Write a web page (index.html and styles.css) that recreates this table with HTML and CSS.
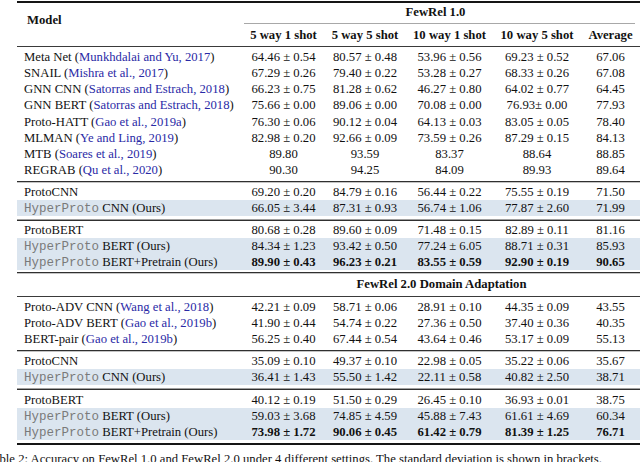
FILE: index.html
```html
<!DOCTYPE html>
<html>
<head>
<meta charset="utf-8">
<link rel="stylesheet" href="styles.css">
</head>
<body>
<div class="page">
  <div class="table">
    <div class="rule heavy"></div>
    <div class="head">
      <div class="model">Model</div>
      <div class="span">FewRel 1.0</div>
      <div class="cmid"></div>
      <div class="ch">5 way 1 shot</div>
      <div class="ch">5 way 5 shot</div>
      <div class="ch">10 way 1 shot</div>
      <div class="ch">10 way 5 shot</div>
      <div class="ch">Average</div>
    </div>
    <div class="rule"></div>
    <div class="group ga">
      <div class="row"><span>Meta Net (<span class="cite">Munkhdalai and Yu, 2017</span>)</span><span>64.46 ± 0.54</span><span>80.57 ± 0.48</span><span>53.96 ± 0.56</span><span>69.23 ± 0.52</span><span>67.06</span></div>
      <div class="row"><span>SNAIL (<span class="cite">Mishra et al., 2017</span>)</span><span>67.29 ± 0.26</span><span>79.40 ± 0.22</span><span>53.28 ± 0.27</span><span>68.33 ± 0.26</span><span>67.08</span></div>
      <div class="row"><span>GNN CNN (<span class="cite">Satorras and Estrach, 2018</span>)</span><span>66.23 ± 0.75</span><span>81.28 ± 0.62</span><span>46.27 ± 0.80</span><span>64.02 ± 0.77</span><span>64.45</span></div>
      <div class="row"><span>GNN BERT (<span class="cite">Satorras and Estrach, 2018</span>)</span><span>75.66 ± 0.00</span><span>89.06 ± 0.00</span><span>70.08 ± 0.00</span><span>76.93± 0.00</span><span>77.93</span></div>
      <div class="row"><span>Proto-HATT (<span class="cite">Gao et al., 2019a</span>)</span><span>76.30 ± 0.06</span><span>90.12 ± 0.04</span><span>64.13 ± 0.03</span><span>83.05 ± 0.05</span><span>78.40</span></div>
      <div class="row"><span>MLMAN (<span class="cite">Ye and Ling, 2019</span>)</span><span>82.98 ± 0.20</span><span>92.66 ± 0.09</span><span>73.59 ± 0.26</span><span>87.29 ± 0.15</span><span>84.13</span></div>
      <div class="row"><span>MTB (<span class="cite">Soares et al., 2019</span>)</span><span>89.80</span><span>93.59</span><span>83.37</span><span>88.64</span><span>88.85</span></div>
      <div class="row"><span>REGRAB (<span class="cite">Qu et al., 2020</span>)</span><span>90.30</span><span>94.25</span><span>84.09</span><span>89.93</span><span>89.64</span></div>
    </div>
    <div class="rule soft"></div>
    <div class="group gb">
      <div class="row"><span>ProtoCNN</span><span>69.20 ± 0.20</span><span>84.79 ± 0.16</span><span>56.44 ± 0.22</span><span>75.55 ± 0.19</span><span>71.50</span></div>
      <div class="row hl"><span><span class="mono">HyperProto</span> CNN (Ours)</span><span>66.05 ± 3.44</span><span>87.31 ± 0.93</span><span>56.74 ± 1.06</span><span>77.87 ± 2.60</span><span>71.99</span></div>
    </div>
    <div class="rule dbl"></div>
    <div class="group gc">
      <div class="row"><span>ProtoBERT</span><span>80.68 ± 0.28</span><span>89.60 ± 0.09</span><span>71.48 ± 0.15</span><span>82.89 ± 0.11</span><span>81.16</span></div>
      <div class="row hl"><span><span class="mono">HyperProto</span> BERT (Ours)</span><span>84.34 ± 1.23</span><span>93.42 ± 0.50</span><span>77.24 ± 6.05</span><span>88.71 ± 0.31</span><span>85.93</span></div>
      <div class="row hl"><span><span class="mono">HyperProto</span> BERT+Pretrain (Ours)</span><span class="b">89.90 ± 0.43</span><span class="b">96.23 ± 0.21</span><span class="b">83.55 ± 0.59</span><span class="b">92.90 ± 0.19</span><span class="b">90.65</span></div>
    </div>
    <div class="rule soft"></div>
    <div class="group gh">
      <div class="row"><span></span><span class="span2">FewRel 2.0 Domain Adaptation</span></div>
    </div>
    <div class="rule"></div>
    <div class="group gd">
      <div class="row"><span>Proto-ADV CNN (<span class="cite">Wang et al., 2018</span>)</span><span>42.21 ± 0.09</span><span>58.71 ± 0.06</span><span>28.91 ± 0.10</span><span>44.35 ± 0.09</span><span>43.55</span></div>
      <div class="row"><span>Proto-ADV BERT (<span class="cite">Gao et al., 2019b</span>)</span><span>41.90 ± 0.44</span><span>54.74 ± 0.22</span><span>27.36 ± 0.50</span><span>37.40 ± 0.36</span><span>40.35</span></div>
      <div class="row"><span>BERT-pair (<span class="cite">Gao et al., 2019b</span>)</span><span>56.25 ± 0.40</span><span>67.44 ± 0.54</span><span>43.64 ± 0.46</span><span>53.17 ± 0.09</span><span>55.13</span></div>
    </div>
    <div class="rule soft"></div>
    <div class="group ge">
      <div class="row"><span>ProtoCNN</span><span>35.09 ± 0.10</span><span>49.37 ± 0.10</span><span>22.98 ± 0.05</span><span>35.22 ± 0.06</span><span>35.67</span></div>
      <div class="row hl"><span><span class="mono">HyperProto</span> CNN (Ours)</span><span>36.41 ± 1.43</span><span>55.50 ± 1.42</span><span>22.11 ± 0.58</span><span>40.82 ± 2.50</span><span>38.71</span></div>
    </div>
    <div class="rule dbl"></div>
    <div class="group gf">
      <div class="row"><span>ProtoBERT</span><span>40.12 ± 0.19</span><span>51.50 ± 0.29</span><span>26.45 ± 0.10</span><span>36.93 ± 0.01</span><span>38.75</span></div>
      <div class="row hl"><span><span class="mono">HyperProto</span> BERT (Ours)</span><span>59.03 ± 3.68</span><span>74.85 ± 4.59</span><span>45.88 ± 7.43</span><span>61.61 ± 4.69</span><span>60.34</span></div>
      <div class="row hl"><span><span class="mono">HyperProto</span> BERT+Pretrain (Ours)</span><span class="b">73.98 ± 1.72</span><span class="b">90.06 ± 0.45</span><span class="b">61.42 ± 0.79</span><span class="b">81.39 ± 1.25</span><span class="b">76.71</span></div>
    </div>
    <div class="rule heavy"></div>
  </div>
  <p class="caption">Table 2: Accuracy on FewRel 1.0 and FewRel 2.0 under 4 different settings. The standard deviation is shown in brackets.</p>
</div>
</body>
</html>
```

FILE: styles.css
```css
* {
  box-sizing: border-box;
  margin: 0;
  padding: 0;
}

html, body {
  background: #ffffff;
}

body {
  margin: 0;
  overflow: hidden;
  font-family: "Liberation Serif", "Times New Roman", serif;
  font-size: 12.7px;
  color: #111111;
}

.page {
  padding-top: 1px;
  width: 640px;
  overflow: hidden;
}

.table {
  margin-left: 17px;
  width: 623px;
}

.rule {
  height: 1px;
  background: #3a3a3a;
}

.rule.heavy {
  height: 2px;
  background: #151515;
}

.rule.soft {
  height: 2px;
  background: none;
  border-top: 1px solid #303030;
  border-bottom: 1px solid #c4c4c4;
}

.rule.dbl {
  height: 2px;
  background: none;
  border-top: 1px solid #a0a0a0;
  border-bottom: 1px solid #303030;
}

.head {
  display: grid;
  grid-template-columns: 226px 81px 82px 87px 88px 59px;
  grid-template-rows: 20px 1px 22px;
}

.model {
  grid-column: 1;
  grid-row: 1 / 4;
  padding: 9px 0 0 10px;
  line-height: 16px;
  font-weight: bold;
}

.span {
  grid-column: 2 / 7;
  grid-row: 1;
  text-align: center;
  line-height: 18px;
  font-weight: bold;
  padding-right: 12px;
}

.cmid {
  grid-column: 2 / 7;
  grid-row: 2;
  background: #a8a8a8;
  margin: 0 5px 0 1px;
}

.ch {
  grid-row: 3;
  line-height: 22px;
  text-align: center;
  font-weight: bold;
  white-space: nowrap;
}

.group.ga { padding: 2px 0 3px; }
.group.gb { padding: 1px 0 3px; }
.group.gc { padding: 1px 0 2px; }
.group.gh { padding: 2px 0 4px; }
.group.gd { padding: 2px 0 3px; }
.group.ge { padding: 1px 0 3px; }
.group.gf { padding: 2px 0 3px; }

.row {
  display: grid;
  grid-template-columns: 226px 81px 82px 87px 88px 59px;
  height: 16px;
  line-height: 16px;
}

.ga .row {
  height: 16.15px;
}

.row > span {
  text-align: center;
  white-space: nowrap;
}

.row > span:first-child {
  text-align: left;
  padding-left: 7px;
}

.row > .span2 {
  grid-column: 2 / 7;
  font-weight: bold;
}

.hl {
  background: #dbe5ef;
}

.b {
  font-weight: bold;
}

.mono {
  font-family: "Liberation Mono", "Courier New", monospace;
  font-size: 12.5px;
  color: #7a7a7a;
}

.cite {
  color: #2a2aa6;
}

.caption {
  margin: 6px 0 0 -13px;
  white-space: nowrap;
  line-height: 16px;
}
```
